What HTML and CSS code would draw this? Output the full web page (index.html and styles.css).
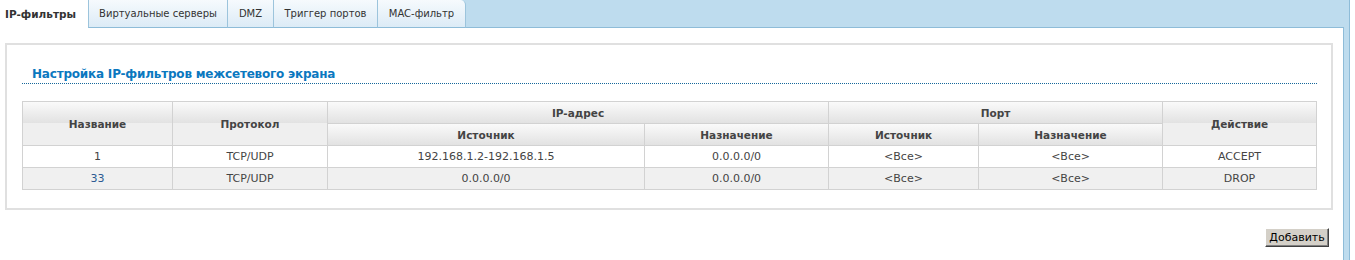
FILE: index.html
```html
<!DOCTYPE html>
<html lang="ru">
<head>
    <meta charset="UTF-8">
    <title>IP-фильтры</title>
    <link rel="stylesheet" href="styles.css">
</head>
<body>
    <div class="frame">
        <div class="main">
            <ul class="tabs">
                <li class="tab active">IP-фильтры</li>
                <li class="tab tab-virt">Виртуальные серверы</li>
                <li class="tab tab-dmz">DMZ</li>
                <li class="tab tab-trig">Триггер портов</li>
                <li class="tab tab-mac">MAC-фильтр</li>
                <li class="tabs-fill"></li>
            </ul>

            <div class="panel">
                <div class="box">
                    <h2 class="box-title">Настройка IP-фильтров межсетевого экрана</h2>
                    <table class="grid">
                        <colgroup>
                            <col style="width:150px">
                            <col style="width:155px">
                            <col style="width:317px">
                            <col style="width:184px">
                            <col style="width:150px">
                            <col style="width:184px">
                            <col style="width:154px">
                        </colgroup>
                        <thead>
                            <tr>
                                <th rowspan="2">Название</th>
                                <th rowspan="2">Протокол</th>
                                <th colspan="2">IP-адрес</th>
                                <th colspan="2">Порт</th>
                                <th rowspan="2">Действие</th>
                            </tr>
                            <tr>
                                <th>Источник</th>
                                <th>Назначение</th>
                                <th>Источник</th>
                                <th>Назначение</th>
                            </tr>
                        </thead>
                        <tbody>
                            <tr>
                                <td>1</td>
                                <td>TCP/UDP</td>
                                <td>192.168.1.2-192.168.1.5</td>
                                <td>0.0.0.0/0</td>
                                <td>&lt;Все&gt;</td>
                                <td>&lt;Все&gt;</td>
                                <td>ACCEPT</td>
                            </tr>
                            <tr class="odd">
                                <td class="link">33</td>
                                <td>TCP/UDP</td>
                                <td>0.0.0.0/0</td>
                                <td>0.0.0.0/0</td>
                                <td>&lt;Все&gt;</td>
                                <td>&lt;Все&gt;</td>
                                <td>DROP</td>
                            </tr>
                        </tbody>
                    </table>
                </div>

                <div class="actions">
                    <button type="button" class="btn">Добавить</button>
                </div>
            </div>
        </div>
    </div>
</body>
</html>
```

FILE: styles.css
```css
body {
    margin: 0;
    font-family: "DejaVu Sans", Verdana, sans-serif;
    font-size: 11px;
    color: #333;
    background: #fff;
}

/* внешняя рамка с голубой полосой справа */
.frame {
    box-sizing: border-box;
    width: 1350px;
    min-height: 260px;
    display: flex;
    padding-right: 5px;
    background: #bedcee;
    border-right: 1px solid #8ebcd8;
}
.main {
    flex: 1;
    display: flex;
    flex-direction: column;
}

/* вкладки */
.tabs {
    display: flex;
    margin: 0;
    padding: 0;
    list-style: none;
    font-size: 10px;
}
.tab {
    box-sizing: border-box;
    height: 28px;
    display: flex;
    align-items: center;
    justify-content: center;
    border-left: 1px solid #9cc4dc;
    border-bottom: 1px solid #8ebcd8;
    background: linear-gradient(#f6fafd, #dcebf6);
    color: #333;
    padding-bottom: 1px;
}
.tab.active {
    width: 88px;
    justify-content: flex-start;
    padding-left: 5px;
    border: none;
    background: #fff;
    font-weight: bold;
    font-size: 10.5px;
}
.tab-virt { width: 139px; }
.tab-dmz { width: 46px; }
.tab-trig { width: 104px; }
.tab-mac {
    width: 89px;
    border-right: 1px solid #9cc4dc;
    border-top-right-radius: 5px;
}
.tabs-fill {
    flex: 1;
    border-bottom: 1px solid #8ebcd8;
}

.panel {
    flex: 1;
    background: #fff;
    border-right: 1px solid #8ebcd8;
    padding: 15px 10px 0 5px;
}

.box {
    border: 2px solid #e0e0e0;
    padding: 21px 14px 18px 15px;
}
.box-title {
    margin: 0 0 17px;
    padding: 0 0 1px 10px;
    font-size: 12px;
    line-height: 16px;
    letter-spacing: -0.2px;
    font-weight: bold;
    color: #0b78bf;
    border-bottom: 1px dotted #16679a;
}

/* таблица правил */
.grid {
    width: 100%;
    table-layout: fixed;
    border-collapse: collapse;
    border: 1px solid #d2d2d2;
}
.grid th,
.grid td {
    height: 21px;
    padding: 0;
    text-align: center;
    border: 1px solid #d2d2d2;
}
.grid th {
    font-weight: bold;
    font-size: 10.5px;
    color: #444;
    background: #efefef linear-gradient(#fafafa, #e2e2e2) no-repeat;
    background-size: 100% 21px;
}
.grid td {
    color: #444;
    background: #fff;
}
.grid tr.odd td {
    background: #f0f0f0;
}
.grid td.link {
    color: #2c5a92;
}

.actions {
    padding: 18px 4px 0 0;
    text-align: right;
}
.btn {
    box-sizing: border-box;
    width: 64px;
    height: 19px;
    padding: 0;
    font-family: "DejaVu Sans", Verdana, sans-serif;
    font-size: 11px;
    color: #000;
    background: #d4d0c8;
    border: 1px solid;
    border-color: #fff #404040 #404040 #fff;
    box-shadow: inset -1px -1px #808080;
    cursor: pointer;
}
```
